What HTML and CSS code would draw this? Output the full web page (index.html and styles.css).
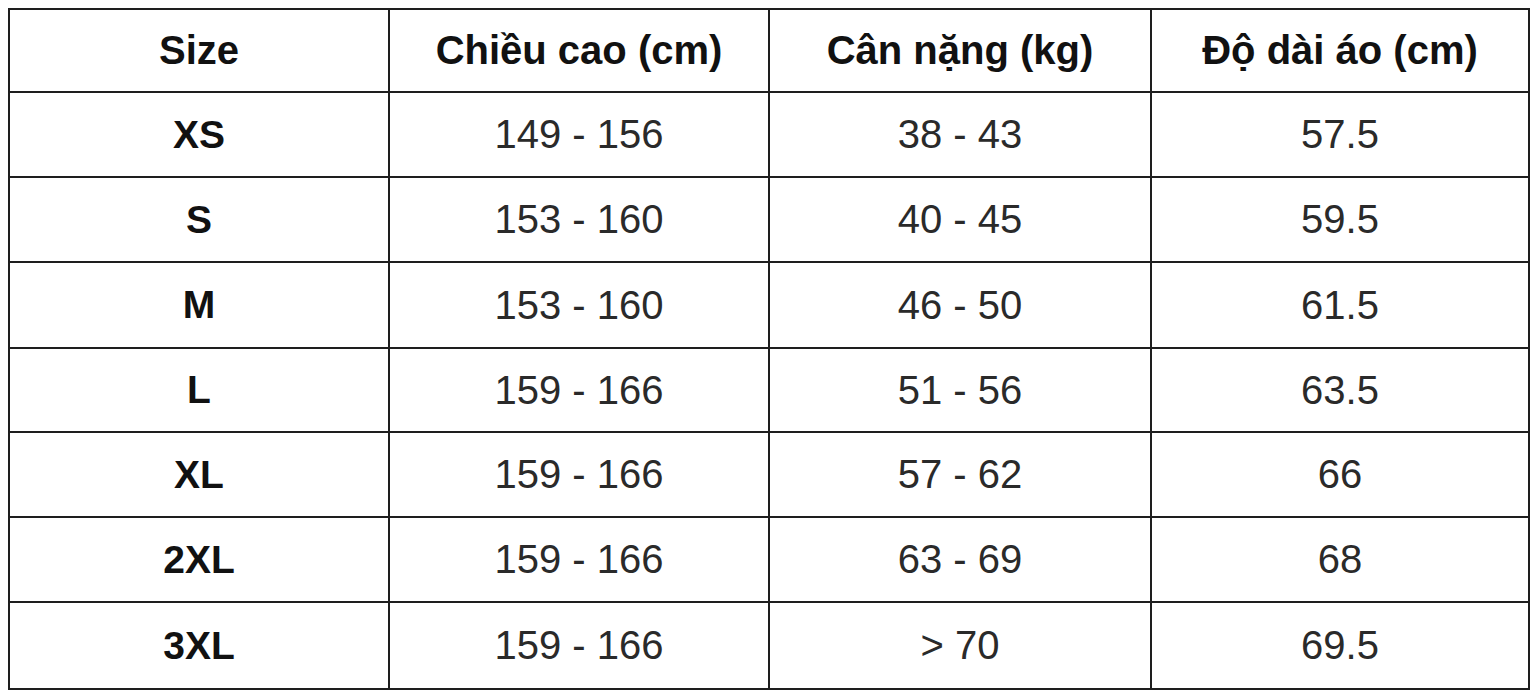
FILE: index.html
```html
<!DOCTYPE html>
<html lang="vi">
<head>
<meta charset="utf-8">
<title>Bảng size</title>
<link rel="stylesheet" href="styles.css">
</head>
<body>
<div class="page">
  <div class="size-table" role="table">
    <div class="cell head">Size</div>
    <div class="cell head">Chiều cao (cm)</div>
    <div class="cell head">Cân nặng (kg)</div>
    <div class="cell head">Độ dài áo (cm)</div>

    <div class="cell size">XS</div>
    <div class="cell">149 - 156</div>
    <div class="cell">38 - 43</div>
    <div class="cell">57.5</div>

    <div class="cell size">S</div>
    <div class="cell">153 - 160</div>
    <div class="cell">40 - 45</div>
    <div class="cell">59.5</div>

    <div class="cell size">M</div>
    <div class="cell">153 - 160</div>
    <div class="cell">46 - 50</div>
    <div class="cell">61.5</div>

    <div class="cell size">L</div>
    <div class="cell">159 - 166</div>
    <div class="cell">51 - 56</div>
    <div class="cell">63.5</div>

    <div class="cell size">XL</div>
    <div class="cell">159 - 166</div>
    <div class="cell">57 - 62</div>
    <div class="cell">66</div>

    <div class="cell size">2XL</div>
    <div class="cell">159 - 166</div>
    <div class="cell">63 - 69</div>
    <div class="cell">68</div>

    <div class="cell size">3XL</div>
    <div class="cell">159 - 166</div>
    <div class="cell">&gt; 70</div>
    <div class="cell">69.5</div>
  </div>
</div>
</body>
</html>
```

FILE: styles.css
```css
html, body {
  margin: 0;
  padding: 0;
  background: #ffffff;
}

.page {
  padding: 8px;
  font-family: "Liberation Sans", Arial, sans-serif;
}

.size-table {
  display: grid;
  grid-template-columns: 380px 380px 382px 378px;
  grid-template-rows: 83px 85px 85px 86px 84px 85px 85px 87px;
  width: 1522px;
  box-sizing: border-box;
  border-top: 2px solid #1e1e1e;
  border-left: 2px solid #1e1e1e;
}

.cell {
  display: flex;
  align-items: center;
  justify-content: center;
  box-sizing: border-box;
  border-right: 2px solid #1e1e1e;
  border-bottom: 2px solid #1e1e1e;
  font-size: 40px;
  color: #2a2a2a;
}

.head {
  font-weight: bold;
  font-size: 40px;
  color: #111111;
}

.size {
  font-weight: bold;
  font-size: 39px;
  color: #111111;
}
```
